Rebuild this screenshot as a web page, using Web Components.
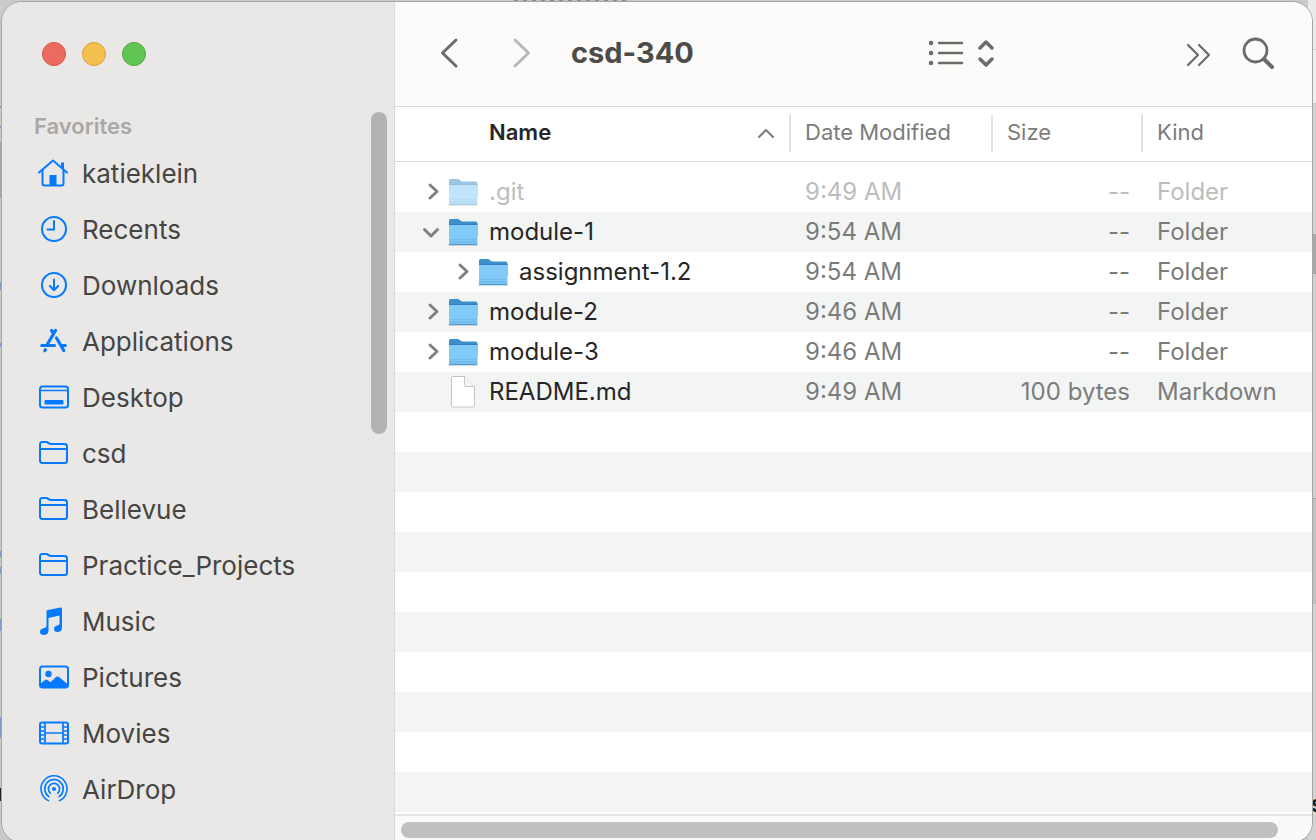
<!DOCTYPE html>
<html lang="en">
<head>
<meta charset="utf-8">
<title>csd-340</title>
<style>
  html, body { margin: 0; height: 100%; overflow: hidden; }
  body { font-family: Inter, "Liberation Sans", sans-serif; background: #d4d3d2; }
</style>
</head>
<body>
<finder-desktop>
  <finder-window>
    <finder-sidebar slot="sidebar" heading="Favorites">
      <sidebar-item icon="home">katieklein</sidebar-item>
      <sidebar-item icon="clock">Recents</sidebar-item>
      <sidebar-item icon="download">Downloads</sidebar-item>
      <sidebar-item icon="apps">Applications</sidebar-item>
      <sidebar-item icon="desktop">Desktop</sidebar-item>
      <sidebar-item icon="folder">csd</sidebar-item>
      <sidebar-item icon="folder">Bellevue</sidebar-item>
      <sidebar-item icon="folder">Practice_Projects</sidebar-item>
      <sidebar-item icon="music">Music</sidebar-item>
      <sidebar-item icon="pictures">Pictures</sidebar-item>
      <sidebar-item icon="movies">Movies</sidebar-item>
      <sidebar-item icon="airdrop">AirDrop</sidebar-item>
    </finder-sidebar>
    <finder-toolbar>csd-340</finder-toolbar>
    <finder-list></finder-list>
  </finder-window>
</finder-desktop>

<script>
const define = (name, html, setup) => customElements.define(name, class extends HTMLElement {
  connectedCallback() {
    if (this.shadowRoot) return;
    const root = this.attachShadow({ mode: 'open' });
    root.innerHTML = typeof html === 'function' ? html(this) : html;
    if (setup) setup(this, root);
  }
});

const BUTTON = `button { display: flex; align-items: center; justify-content: center; border: 0; padding: 0; background: none; font: inherit; color: inherit; }`;

/* Sidebar glyphs, each on a 32 x 32 grid */
const ICONS = {
  home: `<g transform="translate(-1 0)"><g fill="none" stroke="currentColor" stroke-width="2" stroke-linejoin="round" stroke-linecap="round"><path d="M2 15.500 16 3.500l14 12"/><path d="M5.500 13v13.500q0 2 2 2h17q2 0 2-2V13"/></g><path d="M24 5.500h3v8l-3-2.500zM12.500 18h7v10h-7z" fill="currentColor"/></g>`,
  clock: `<g fill="none" stroke="currentColor" stroke-width="2" stroke-linecap="round"><circle cx="16" cy="16" r="12"/><path d="M16 8v8.500H9.500"/></g>`,
  download: `<g fill="none" stroke="currentColor" stroke-width="2" stroke-linecap="round" stroke-linejoin="round"><circle cx="16" cy="16" r="12"/><path d="M16 10.500v10.500M11.800 17l4.200 4.200 4.200-4.200"/></g>`,
  apps: `<g fill="none" stroke="currentColor" stroke-width="3.200" stroke-linecap="round"><path d="M17.500 5.500 9.500 19M13.500 5.500l2 3M3.800 20.500H16.500M18.500 13l7.300 12.500M23.500 20.500h3.800M6.800 25.700l.7-1"/></g>`,
  desktop: `<rect x="2" y="5.500" width="28" height="21" rx="2.500" fill="none" stroke="currentColor" stroke-width="2"/><path d="M2 9.500h28" stroke="currentColor" stroke-width="1.500"/><rect x="6.500" y="19" width="19" height="4.500" rx="1" fill="currentColor"/>`,
  folder: `<path d="M2 7.500Q2 5 4.500 5H8q1.500 0 2.500 1t2.500 1h13.500Q29 7 29 9.500V23.500q0 2.500-2.500 2.500H4.500Q2 26 2 23.500zM2 12h27" fill="none" stroke="currentColor" stroke-width="2"/>`,
  music: `<path transform="translate(-1 0)" d="M9.500 6.500q0-1.200 1.200-1.400L23.800 2.600q1.200-.2 1.200 1V22.500q0 4-4 4.500-4 .3-4-3 0-3 4-3.700 1.500-.2 1.500-1.600V10.500L11.500 13v12.500q0 4-4.200 4.500Q3 30.200 3 27q0-3 3.500-3.700 3-.5 3-2.300z" fill="currentColor"/>`,
  pictures: `<rect x="2" y="5.500" width="28" height="21" rx="2.500" fill="none" stroke="currentColor" stroke-width="2"/><circle cx="10.500" cy="13" r="3.200" fill="currentColor"/><path d="M2 23l5-4q1.300-1 2.500 0l3 2.300 5.500-5.200q1.500-1.200 3 0L29.500 23v3H3z" fill="currentColor"/>`,
  movies: `<rect x="2" y="5.500" width="28" height="21" rx="2" fill="none" stroke="currentColor" stroke-width="2"/><path d="M7 5v22M25 5v22M7 16h18M2 10h5M2 14h5M2 18h5M2 22h5M25 10h5M25 14h5M25 18h5M25 22h5" stroke="currentColor" stroke-width="1.700" fill="none"/>`,
  airdrop: `<circle cx="16" cy="16" r="2" fill="currentColor"/><g fill="none" stroke="currentColor" stroke-width="1.600" stroke-linecap="round"><path d="M10.500 27.600a13 13 0 1 1 11 0"/><path d="M10.900 23.600a9.300 9.300 0 1 1 10.200 0"/><path d="M12.300 20.200a5.600 5.600 0 1 1 7.400 0"/></g>`
};

/* The desktop shows slivers of the windows that lie behind this one */
define('finder-desktop', `
  <style>
    :host { display: flex; height: 100vh; box-sizing: border-box; padding: 2px 4px 0 2px; position: relative;
      background:
        repeating-linear-gradient(90deg, #8c8c8a 0 4px, #c4c4c2 4px 9px) 514px 0 / 114px 2px no-repeat,
        linear-gradient(#ebebeb 0 49px, #d0d0d0 49px 50px, #f0f0f0 50px 103px, #c4c4c4 103px 104px, #d4d3d3 104px 234px, #a8a8a8 234px 274px, #d0d0d0 274px 498px, #a0a0a0 498px 499px, #c0c0c0 499px 604px, #d4d3d3 604px) right / 8px 100% no-repeat,
        linear-gradient(transparent 0 106px, #7f9cc6 106px 108px, transparent 108px 126px, #7f9cc6 126px 128px, transparent 128px 142px, #a5a5a5 142px 198px, transparent 198px 282px, #7f9cc6 282px 290px, transparent 290px 343px, #7f9cc6 343px 347px, transparent 347px 551px, #7f9cc6 551px 557px, transparent 557px 567px, #7f9cc6 567px 574px, transparent 574px 619px, #7f9cc6 619px 631px, transparent 631px 717px, #7f9cc6 717px 738px, transparent 738px 788px, #222 788px 801px, transparent 801px) left / 2px 100% no-repeat,
        #cbcac9; }
    ::slotted(*) { flex: 1; margin-bottom: -2px; position: relative; }
    .behind { position: absolute; right: -8px; bottom: 20px; font-size: 24px; line-height: 32px; font-weight: 600; color: #1c1c1c; }
  </style><span class="behind" aria-hidden="true">s</span><slot></slot>`);

define('finder-window', `
  <style>
    :host { display: grid; grid-template-columns: 392px minmax(0, 1fr); min-width: 0;
      border-radius: 20px; overflow: hidden; background: #fff; box-shadow: 0 0 0 1px #a5a5a4; }
    main { display: flex; flex-direction: column; min-width: 0; min-height: 0; border-left: 1px solid #dad9d8; }
  </style>
  <slot name="sidebar"></slot>
  <main><slot></slot></main>`);

define('finder-sidebar', el => `
  <style>
    :host { display: flex; min-height: 0; background: #e9e8e6; }
    .content { flex: 1; min-width: 0; }
    .lights { display: flex; gap: 16px; padding: 40px 40px 0; }
    ${BUTTON}
    button { width: 24px; height: 24px; border-radius: 12px; border: 1px solid; }
    .close { background: #ed6a5e; border-color: #d35549; }
    .min { background: #f5bf4f; border-color: #d8a13d; }
    .zoom { background: #61c554; border-color: #50a73f; }
    h2 { margin: 44px 0 0; padding-left: 32px; font-size: 22px; line-height: 32px; font-weight: 600; color: #a9a8a7; }
    nav { display: flex; flex-direction: column; padding-top: 3px; }
    .track { width: 16px; padding: 110px 7px 0 0; }
    .thumb { height: 322px; border-radius: 8px; background: #b4b3b1; }
  </style>
  <div class="content">
    <div class="lights">
      <button class="close" aria-label="Close"></button>
      <button class="min" aria-label="Minimize"></button>
      <button class="zoom" aria-label="Zoom"></button>
    </div>
    <h2>${el.getAttribute('heading')}</h2>
    <nav><slot></slot></nav>
  </div>
  <div class="track"><div class="thumb"></div></div>`);

define('sidebar-item', el => `
  <style>
    :host { display: block; }
    a { display: flex; align-items: center; gap: 12px; height: 56px; padding-left: 36px; font-size: 26px; color: #454544; text-decoration: none; white-space: nowrap; }
    svg { width: 32px; height: 32px; color: #057aff; flex: none; }
  </style>
  <a href="#"><svg viewBox="0 0 32 32" aria-hidden="true">${ICONS[el.getAttribute('icon')]}</svg><span><slot></slot></span></a>`);

define('finder-toolbar', `
  <style>
    :host { display: flex; align-items: center; height: 102px; flex: none; background: #fcfbf9; border-bottom: 1px solid #dad9d8; padding: 0 36px 2px; color: #6b6b69; }
    ${BUTTON}
    button { width: 36px; height: 40px; flex: none; }
    svg { fill: none; stroke: currentColor; stroke-linecap: round; stroke-linejoin: round; }
    .nav { display: flex; gap: 36px; }
    .off { color: #b9b9b7; }
    h1 { margin: 0 0 0 32px; flex: 1; font-size: 29px; line-height: 40px; font-weight: 700; color: #4b4b49; }
    .view { width: 68px; gap: 12px; margin-right: 184px; }
    .tools { display: flex; gap: 24px; }
  </style>
  <div class="nav">
    <button aria-label="Back"><svg width="36" height="40" stroke-width="3"><path d="M25 7 11.500 20 25 33"/></svg></button>
    <button class="off" aria-label="Forward"><svg width="36" height="40" stroke-width="3"><path d="M12 7 25.500 20 12 33"/></svg></button>
  </div>
  <h1><slot></slot></h1>
  <button class="view" aria-label="View options">
    <svg width="36" height="40"><path d="M11 10h23M11 20h23M11 30h23" stroke-width="2.400"/><path d="M3 10h.01M3 20h.01M3 30h.01" stroke-width="4.500"/></svg>
    <svg width="20" height="40" stroke-width="3.500"><path d="M4 15l6-6 6 6M4 26l6 6 6-6"/></svg>
  </button>
  <div class="tools">
    <button aria-label="More"><svg width="36" height="40" stroke-width="2.200"><path d="M8 12l10 10L8 32M19 12l10 10-10 10"/></svg></button>
    <button aria-label="Search"><svg width="36" height="40"><circle cx="15.500" cy="17.500" r="11.500" stroke-width="2.800"/><path d="M24 26l8 8" stroke-width="4"/></svg></button>
  </div>`);

define('disclosure-button', el => `
  <style>
    :host { display: block; width: 24px; height: 24px; color: #808080; }
    ${BUTTON}
  </style>
  <button aria-label="${el.hasAttribute('open') ? 'Collapse' : 'Expand'}"><svg width="24" height="24" fill="none" stroke="currentColor" stroke-width="3" stroke-linecap="round" stroke-linejoin="round"><path d="${el.hasAttribute('open') ? 'M3.500 9.500l6.500 6.500 6.500-6.500' : 'M9 5l7 6.500-7 6.500'}"/></svg></button>`);

define('file-icon', el => `
  <style>:host { display: block; width: 32px; height: 32px; } svg { display: block; }</style>
  ${el.getAttribute('kind') === 'folder' ? `
  <svg width="32" height="32">
    <defs><linearGradient id="f" x1="0" y1="0" x2="0" y2="1"><stop offset="0" stop-color="#82c9f5"/><stop offset=".75" stop-color="#82cbf8"/><stop offset="1" stop-color="#6fbaea"/></linearGradient></defs>
    <rect x="1" y="28" width="30" height="2" rx="1" fill="#000" opacity=".15"/>
    <path d="M2 4.500Q2 3 3.500 3h7.200q1 0 1.800.8l1.200 1q.8.700 1.800.7h13q2 0 2 2V20H2z" fill="#3b8fcb"/>
    <path d="M2 8.500h28.500V27.500q0 1.500-1.500 1.500H3.500Q2 29 2 27.500z" fill="url(#f)"/>
    <path d="M2 8.500h28.500" stroke="#2f80c0" stroke-width="1"/>
    <path d="M3 23.500h26.500M3 25.500h26.500" stroke="#5fadde" stroke-width=".5"/>
    <path d="M2.500 28.500h27.500" stroke="#4d9dd0" stroke-width="1"/>
  </svg>` : `
  <svg width="32" height="32" fill="#fff" stroke="#c4c4c4"><path d="M4.500 2q0-1.500 1.500-1.500h11.500L27.500 11V29.500q0 1.500-1.500 1.500H6q-1.500 0-1.500-1.500z"/><path d="M17.500.5V8.500q0 2 2 2h8" fill="#f4f4f4"/></svg>`}`);

const FILES = [
  { name: '.git', date: '9:49 AM', size: '--', kind: 'Folder', dim: true },
  { name: 'module-1', date: '9:54 AM', size: '--', kind: 'Folder', open: true },
  { name: 'assignment-1.2', date: '9:54 AM', size: '--', kind: 'Folder', depth: 1 },
  { name: 'module-2', date: '9:46 AM', size: '--', kind: 'Folder' },
  { name: 'module-3', date: '9:46 AM', size: '--', kind: 'Folder' },
  { name: 'README.md', date: '9:49 AM', size: '100 bytes', kind: 'Markdown' }
];

define('finder-list', `
  <style>
    :host { display: flex; flex-direction: column; flex: 1; min-height: 0; }
    ${BUTTON}
    .view { flex: 1; min-height: 0; overflow: hidden; background: repeating-linear-gradient(#fff 0 40px, #f3f5f4 40px 80px) 0 65px no-repeat; }
    table { width: 100%; border-collapse: separate; border-spacing: 0; table-layout: fixed; font-size: 24px; line-height: 40px; color: #7c7c7b; white-space: nowrap; }
    .c-name { width: 396px; } .c-date { width: 202px; } .c-size { width: 150px; }
    th { height: 47px; padding: 7px 0 0; vertical-align: top; border-bottom: 1px solid #dad9d8; font-size: 22px; line-height: 36px; font-weight: 400; text-align: left; }
    th div { display: flex; height: 38px; padding: 0 14px; border-right: 2px solid #e3e3e3; }
    th:last-child div { border: 0; }
    th button { flex: 1; height: 36px; justify-content: space-between; padding-left: 80px; font-weight: 600; color: #262626; }
    tbody::before { content: ""; display: block; height: 10px; }
    td { height: 40px; padding: 0 0 0 14px; }
    td.size { text-align: right; padding: 0 13px 0 0; }
    .name { display: flex; align-items: center; color: #262626; padding-left: calc(12px + var(--depth, 0) * 30px); }
    .name span { margin-left: 10px; }
    disclosure-button, .gap { width: 24px; margin-right: 2px; }
    .dim { color: #bdbdbc; }
    .dim .name { color: #bdbdbc; }
    .dim file-icon { opacity: .5; }
    .scroller { flex: none; height: 16px; padding: 6px 34px 4px 6px; border-top: 2px solid #e6e6e6; background: #fafafa; }
    .thumb { height: 16px; border-radius: 8px; background: #c0c0c0; }
  </style>
  <div class="view">
    <table>
      <colgroup><col class="c-name"><col class="c-date"><col class="c-size"><col></colgroup>
      <thead><tr>
        <th aria-sort="ascending"><div><button>Name <svg width="18" height="16" fill="none" stroke="#7c7c7b" stroke-width="2" stroke-linecap="round" stroke-linejoin="round"><path d="M2 13l7-7 7 7"/></svg></button></div></th>
        <th><div>Date Modified</div></th><th><div>Size</div></th><th><div>Kind</div></th>
      </tr></thead>
      <tbody>${FILES.map(f => `
        <tr class="${f.dim ? 'dim' : ''}">
          <td><div class="name" style="--depth:${f.depth || 0}">${f.kind === 'Folder' ? `<disclosure-button ${f.open ? 'open' : ''}></disclosure-button>` : '<i class="gap"></i>'}<file-icon kind="${f.kind === 'Folder' ? 'folder' : 'file'}"></file-icon><span>${f.name}</span></div></td>
          <td>${f.date}</td><td class="size">${f.size}</td><td>${f.kind}</td>
        </tr>`).join('')}
      </tbody>
    </table>
  </div>
  <div class="scroller"><div class="thumb"></div></div>`);
</script>
</body>
</html>
